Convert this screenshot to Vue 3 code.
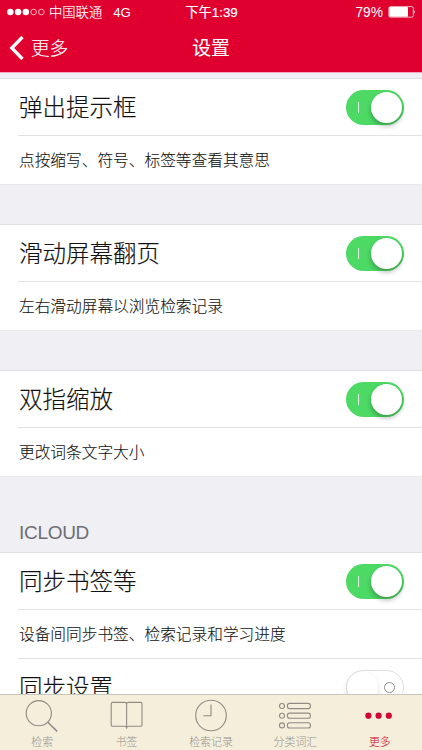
<script setup>
const groups = [
  { rows: [{ title: '弹出提示框', desc: '点按缩写、符号、标签等查看其意思', on: true }] },
  { rows: [{ title: '滑动屏幕翻页', desc: '左右滑动屏幕以浏览检索记录', on: true }] },
  { rows: [{ title: '双指缩放', desc: '更改词条文字大小', on: true }] },
  {
    header: 'ICLOUD',
    rows: [
      { title: '同步书签等', desc: '设备间同步书签、检索记录和学习进度', on: true },
      { title: '同步设置', desc: '', on: false },
    ],
  },
]
const tabs = [
  { id: 'search', label: '检索' },
  { id: 'book', label: '书签' },
  { id: 'history', label: '检索记录' },
  { id: 'list', label: '分类词汇' },
  { id: 'more', label: '更多' },
]
</script>

<template>
  <div class="screen">
    <header class="top">
      <div class="status">
        <div class="carrier">
          <svg class="signal" width="38" height="8" viewBox="0 0 38 8">
            <circle v-for="i in 3" :key="i" :cx="i * 7.75 - 4.4" cy="4" r="3.2" fill="#fff" />
            <circle v-for="i in 2" :key="'o' + i" :cx="i * 7.75 + 18.85" cy="4" r="2.8" fill="none" stroke="#fff" stroke-width=".7" />
          </svg>
          <span class="operator">中国联通</span>
          <span class="network">4G</span>
        </div>
        <div class="time">下午1:39</div>
        <div class="power">
          <span class="percent">79%</span>
          <svg width="28" height="12" viewBox="0 0 28 12">
            <rect x=".9" y=".6" width="24.4" height="10.6" rx="1.5" fill="none" stroke="#fff" stroke-width=".7" />
            <rect x="1.3" y="1" width="18.7" height="9.8" rx=".8" fill="#fff" />
            <path d="M26.2 4.1q1.6 1.8 0 3.6z" fill="#fff" />
          </svg>
        </div>
      </div>
      <div class="nav">
        <div class="back">
          <svg width="15" height="24" viewBox="0 0 15 24">
            <path d="M13.5 1 2.8 12 13.5 23" fill="none" stroke="#fff" stroke-width="3.3" />
          </svg>
          <span>更多</span>
        </div>
        <h1>设置</h1>
        <div></div>
      </div>
    </header>

    <main class="content">
      <section v-for="(g, gi) in groups" :key="gi" class="group">
        <h2 v-if="g.header">{{ g.header }}</h2>
        <div class="card">
          <template v-for="r in g.rows" :key="r.title">
            <div class="row">
              <span class="title">{{ r.title }}</span>
              <span class="switch" :class="{ off: !r.on }">
                <i class="mark"></i><i class="knob"></i>
              </span>
            </div>
            <p v-if="r.desc" class="desc">{{ r.desc }}</p>
          </template>
        </div>
      </section>
    </main>

    <nav class="tabs">
      <div v-for="t in tabs" :key="t.id" class="tab" :class="{ active: t.id === 'more' }">
        <svg width="34" height="34" viewBox="0 0 34 34" fill="none" stroke="#8f8b85" stroke-width="1.1">
          <template v-if="t.id === 'search'">
            <circle cx="13.8" cy="14.2" r="12.6" />
            <path d="m22.8 23.2 9.4 9.2" stroke-width="1.5" />
          </template>
          <template v-else-if="t.id === 'book'">
            <path d="M2.6 3.4h12.2q1.8 0 1.8 1.3 0-1.3 1.8-1.3h12.2q1.4 0 1.4 1.4v21.1q0 1.4-1.4 1.4h-12q-2 0-2 1.8 0-1.8-2-1.8h-12q-1.4 0-1.4-1.4V4.8q0-1.4 1.4-1.4zM16.6 4.7v25" />
          </template>
          <template v-else-if="t.id === 'history'">
            <circle cx="17" cy="16.5" r="15.3" />
            <path d="M17 5.5v11.2H9.4" />
          </template>
          <template v-else-if="t.id === 'list'">
            <g v-for="y in [7, 16.7, 26.4]" :key="y">
              <circle cx="4" :cy="y" r="2.5" />
              <rect x="9.4" :y="y - 2.6" width="23" height="5.2" rx="2.3" />
            </g>
          </template>
          <template v-else>
            <circle v-for="x in [5.4, 15.6, 25.8]" :key="x" :cx="x" cy="16.7" r="3.1" fill="#cf0730" stroke="none" />
          </template>
        </svg>
        <span>{{ t.label }}</span>
      </div>
    </nav>
  </div>
</template>

<style>
body {
  margin: 0;
  overflow: hidden;
}
</style>

<style scoped>
.screen {
  display: flex;
  flex-direction: column;
  width: 422px;
  height: 750px;
  overflow: hidden;
  background: #efeff4;
  color: #111;
  font-family: "Liberation Sans", "Noto Sans CJK SC", sans-serif;
  font-weight: 300;
}
.top {
  flex: none;
  box-sizing: border-box;
  height: 73px;
  background: #df0030;
  border-bottom: 1px solid #f3a9bb;
  color: #fff;
}
.status,
.nav {
  display: grid;
  align-items: center;
}
.status {
  grid-template-columns: 1fr auto 1fr;
  height: 24px;
  padding: 0 6px 0 7px;
  font-size: 13.3px;
  line-height: 24px;
}
.carrier,
.power {
  display: flex;
  align-items: center;
}
.operator,
.network,
.percent,
.time {
  padding-top: 1px;
  line-height: 23px;
}
.operator {
  margin-left: 4px;
  -webkit-text-stroke: 0.15px #fff;
}
.network {
  margin-left: 11px;
}
.time {
  font-weight: 400;
  -webkit-text-stroke: 0.2px #fff;
}
.power {
  justify-content: flex-end;
  gap: 5px;
}
.percent {
  font-size: 13.8px;
}
.nav {
  grid-template-columns: 1fr auto 1fr;
  height: 47px;
  padding: 0 9px;
}
.back {
  display: flex;
  align-items: center;
  gap: 7px;
  font-size: 18.6px;
}
.back span,
h1 {
  padding-bottom: 3px;
}
.back span {
  -webkit-text-stroke: 0.15px #fff;
}
h1 {
  margin: 0;
  font-size: 18.8px;
  font-weight: 400;
  -webkit-text-stroke: 0.1px #fff;
}
.content {
  flex: 1;
  min-height: 0;
  overflow: hidden;
  padding-top: 5px;
}
.group + .group {
  margin-top: 39px;
}
h2 {
  box-sizing: border-box;
  height: 36px;
  margin: 0;
  padding: 5px 19px 0;
  color: #6d6d72;
  font-size: 19px;
  font-weight: 400;
  line-height: 24px;
  letter-spacing: -0.3px;
}
.card {
  background: #fff;
  border-top: 1px solid #e0e0e4;
  border-bottom: 1px solid #e8e8ed;
}
.row {
  display: flex;
  align-items: center;
  justify-content: space-between;
  height: 56px;
  padding: 0 18px 0 19px;
}
.title {
  padding-top: 2px;
  font-size: 23.5px;
  line-height: 34px;
  -webkit-text-stroke: 0.15px #111;
}
.desc {
  box-sizing: border-box;
  height: 49px;
  margin: 0 0 0 18px;
  padding: 1px 0 0 1px;
  border-top: 1px solid #e2e2e4;
  font-size: 15.7px;
  line-height: 47px;
  -webkit-text-stroke: 0.1px #111;
}
.desc + .row {
  margin-left: 18px;
  padding-left: 1px;
  border-top: 1px solid #e2e2e4;
}
.switch {
  display: flex;
  align-items: center;
  justify-content: space-between;
  box-sizing: border-box;
  width: 58px;
  height: 35px;
  padding: 0 2px 0 12px;
  border-radius: 18px;
  background: #4cd964;
}
.mark {
  width: 1.4px;
  height: 11px;
  background: #e8ffec;
}
.knob {
  width: 31px;
  height: 31px;
  border-radius: 50%;
  background: #fff;
  box-shadow: 0 3px 5px rgba(0, 0, 0, 0.28);
}
.switch.off {
  flex-direction: row-reverse;
  justify-content: flex-end;
  gap: 6px;
  padding: 0;
  border: 1.5px solid #dedede;
  background: #fff;
}
.off .mark {
  box-sizing: border-box;
  width: 11px;
  height: 11px;
  border: 1px solid #8e8e8e;
  border-radius: 50%;
  background: transparent;
}
.off .knob {
  box-shadow: 0 3px 6px rgba(0, 0, 0, 0.13);
}
.tabs {
  display: grid;
  flex: none;
  grid-template-columns: repeat(5, 1fr);
  box-sizing: border-box;
  height: 56px;
  background: #f5eedb;
  border-top: 1px solid #c9c5bb;
}
.tab {
  display: flex;
  flex-direction: column;
  align-items: center;
  padding-top: 4px;
  color: #94908a;
  font-size: 10.9px;
  line-height: 18px;
}
.tab svg {
  display: block;
  flex: none;
}
.active {
  color: #cf0730;
}
</style>
